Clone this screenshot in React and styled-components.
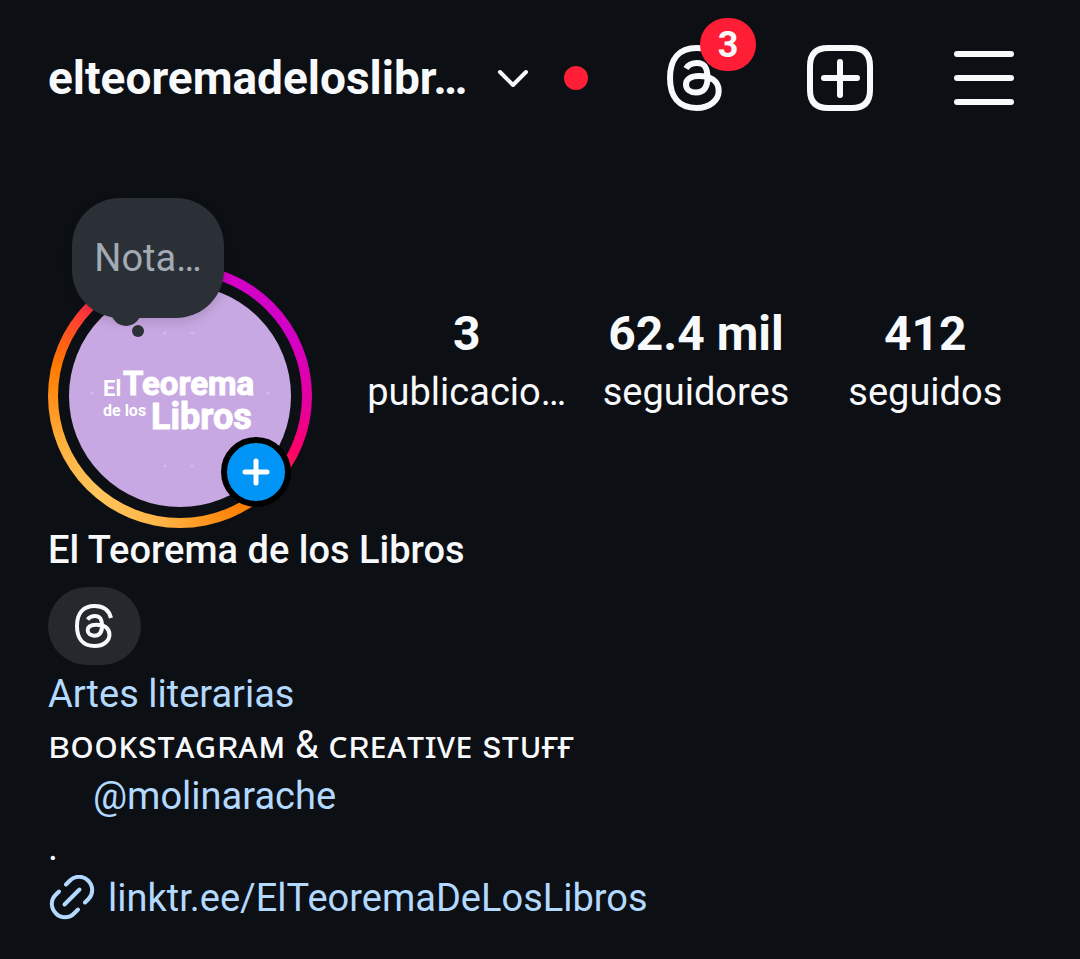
import styled, { createGlobalStyle } from "styled-components";

const background = "#0c0f14";
const primary_white = "#f8f9fb";
const link_blue = "#b3d9ff";
const red = "#ff1e36";
const primary_font = `Roboto, "Noto Sans", sans-serif`;

const GlobalStyle = createGlobalStyle`
	* {
		box-sizing: border-box;
	}
	body {
		margin: 0;
		background-color: ${background};
		color: ${primary_white};
		font-family: ${primary_font};
	}
	h1, h2, p, dl, dd {
		margin: 0;
	}
	button {
		border: 0;
		padding: 0;
		background: none;
		color: inherit;
		font-family: inherit;
		cursor: pointer;
	}
	a {
		color: ${link_blue};
		text-decoration: none;
	}
	svg {
		display: block;
	}
`;

// Top Bar
const TopBar = styled.header`
	display: flex;
	align-items: center;
	justify-content: space-between;
	height: 156px;
	padding: 0 65px 0 48px;
`;
const AccountButton = styled.button`
	display: flex;
	align-items: center;
`;
const Username = styled.h1`
	font-size: 46px;
	line-height: 56px;
	font-weight: 700;
	margin-right: 29px;
`;
const UnreadDot = styled.span`
	width: 24px;
	height: 24px;
	margin-left: 34px;
	border-radius: 50%;
	background-color: ${red};
`;
const BarRight = styled.nav`
	display: flex;
	align-items: center;
	gap: 80px;
`;
const IconButton = styled.button`
	position: relative;
`;
const Badge = styled.span`
	position: absolute;
	top: -27px;
	left: 33px;
	width: 56px;
	height: 53px;
	border-radius: 27px;
	background-color: ${red};
	font-size: 36px;
	line-height: 54px;
	font-weight: 700;
	text-align: center;
`;

// Avatar and stats
const ProfileRow = styled.section`
	display: flex;
	align-items: flex-start;
	gap: 40px;
	padding: 42px 40px 0 48px;
`;
const AvatarColumn = styled.div`
	position: relative;
	flex: none;
	padding-top: 66px;
`;
const StoryRing = styled.div`
	width: 264px;
	height: 264px;
	padding: 10px;
	border-radius: 50%;
	background: conic-gradient(
		#d300c5 0deg,
		#d300c5 62deg,
		#e6009c 95deg,
		#ff0069 116deg,
		#ff7a00 146deg,
		#ff8c14 162deg,
		#ffb648 190deg,
		#ffc55c 220deg,
		#ffb340 246deg,
		#ff7a00 284deg,
		#ff3040 314deg,
		#d300c5 350deg
	);
`;
const Photo = styled.div`
	border: 11px solid ${background};
	border-radius: 50%;
	background-color: #c8a8e2;
	overflow: hidden;
`;
const NoteBubble = styled.button`
	position: absolute;
	top: 0;
	left: 24px;
	width: 152px;
	height: 120px;
	border-radius: 48px;
	background-color: #2b3036;
	box-shadow: 0 4px 12px rgba(12, 15, 20, 0.15);
	color: #a2aab4;
	font-size: 38px;
	line-height: 44px;

	&::before,
	&::after {
		content: "";
		position: absolute;
		border-radius: 50%;
		background-color: #2b3036;
	}
	&::before {
		left: 39px;
		bottom: -8px;
		width: 30px;
		height: 30px;
	}
	&::after {
		left: 60px;
		bottom: -19px;
		width: 12px;
		height: 12px;
	}
`;
const AddStoryButton = styled.button`
	position: absolute;
	right: 21px;
	bottom: 21px;
	width: 70px;
	height: 70px;
	display: grid;
	place-items: center;
	border: 6px solid #000;
	border-radius: 50%;
	background-color: #0095f6;
`;
const Stats = styled.dl`
	flex: 1;
	display: grid;
	grid-template-columns: repeat(3, 1fr);
	padding-top: 108px;
`;
const Stat = styled.div`
	display: flex;
	flex-direction: column-reverse;
	gap: 8px;
	text-align: center;

	dt {
		font-size: 38px;
		line-height: 44px;
	}
	dd {
		font-size: 48px;
		line-height: 56px;
		font-weight: 700;
	}
`;

// Bio
const Bio = styled.section`
	padding: 0 48px 34px;
	font-size: 38px;
	line-height: 51px;
`;
const DisplayName = styled.h2`
	font-size: 38px;
	line-height: 44px;
	font-weight: 500;
`;
const ThreadsPill = styled.button`
	display: grid;
	place-items: center;
	width: 93px;
	height: 78px;
	margin: 15px 0 4px;
	border-radius: 39px;
	background-color: #25282d;
`;
const Mention = styled.p`
	padding-left: 45px;
`;
const SiteLink = styled.a`
	display: flex;
	align-items: center;
	gap: 12px;
`;

const stats = [
	{ label: "publicacio…", value: "3" },
	{ label: "seguidores", value: "62.4 mil" },
	{ label: "seguidos", value: "412" },
];

const ThreadsIcon = ({ width, height }) => (
	<svg
		width={width}
		height={height}
		viewBox="0 0 60 66"
		fill="none"
		stroke={primary_white}
		strokeWidth="6"
	>
		<path d="M54 21C51 9 42.500 3 29.500 3C12 3 3 14 3 33C3 52 12 63 29.500 63C43 63 51.700 55 51.700 46C51.700 36 43.500 31 32 31C24 31 19 34 19 39.500C19 44.500 23.500 47.500 29 47.500C36.500 47.500 40.500 42.500 40.500 33C40.500 23 38 18 30 18C24.500 18 21.500 19.500 19 23.500" />
	</svg>
);

const LogoText = () => (
	<svg
		width="222"
		height="222"
		viewBox="0 0 222 222"
		fill="#fff"
		stroke="#fff"
		strokeLinejoin="round"
		fontFamily={primary_font}
		fontWeight="700"
	>
		<g fill="#d8b9ec" stroke="none">
			<circle cx="96" cy="48" r="1.5" />
			<circle cx="123" cy="48" r="1.5" />
			<circle cx="96" cy="181" r="1.5" />
			<circle cx="123" cy="181" r="1.5" />
			<circle cx="23" cy="108" r="1.5" />
			<circle cx="199" cy="108" r="1.5" />
		</g>
		<text x="34" y="111" fontSize="22" strokeWidth="0">El</text>
		<text x="54" y="110" fontSize="33" strokeWidth="1">Teorema</text>
		<text x="34" y="131" fontSize="16" strokeWidth="0">de los</text>
		<text x="82" y="144" fontSize="36" strokeWidth="1">Libros</text>
	</svg>
);

const App = () => {
	return (
		<>
			<GlobalStyle />
			<TopBar>
				<AccountButton>
					<Username>elteoremadeloslibr…</Username>
					<svg width="34" height="24" viewBox="0 0 34 24" fill="none" stroke={primary_white} strokeWidth="4" strokeLinecap="round" strokeLinejoin="round">
						<path d="M4 6L17 19L30 6" />
					</svg>
					<UnreadDot />
				</AccountButton>
				<BarRight>
					<IconButton aria-label="Threads">
						<ThreadsIcon width={60} height={66} />
						<Badge>3</Badge>
					</IconButton>
					<IconButton aria-label="Crear">
						<svg width="66" height="66" viewBox="0 0 66 66" fill="none" stroke={primary_white} strokeWidth="6" strokeLinecap="round">
							<path d="M21 3H45C57 3 63 9 63 21V45C63 57 57 63 45 63H21C9 63 3 57 3 45V21C3 9 9 3 21 3Z" />
							<path d="M33 17V50M17 33H50" />
						</svg>
					</IconButton>
					<IconButton aria-label="Menú">
						<svg width="62" height="66" viewBox="0 0 62 66" fill="none" stroke={primary_white} strokeWidth="6" strokeLinecap="round">
							<path d="M4 9H58M4 33H58M4 57H58" />
						</svg>
					</IconButton>
				</BarRight>
			</TopBar>

			<ProfileRow>
				<AvatarColumn>
					<StoryRing>
						<Photo>
							<LogoText />
						</Photo>
					</StoryRing>
					<NoteBubble>Nota…</NoteBubble>
					<AddStoryButton aria-label="Agregar historia">
						<svg width="28" height="28" viewBox="0 0 28 28" fill="none" stroke="#fff" strokeWidth="5" strokeLinecap="round">
							<path d="M14 3V25M3 14H25" />
						</svg>
					</AddStoryButton>
				</AvatarColumn>
				<Stats>
					{stats.map(({ label, value }) => (
						<Stat key={label}>
							<dt>{label}</dt>
							<dd>{value}</dd>
						</Stat>
					))}
				</Stats>
			</ProfileRow>

			<Bio>
				<DisplayName>El Teorema de los Libros</DisplayName>
				<ThreadsPill aria-label="Perfil de Threads">
					<ThreadsIcon width={40} height={44} />
				</ThreadsPill>
				<p>
					<a href="#categoria">Artes literarias</a>
				</p>
				<p>ʙᴏᴏᴋsᴛᴀɢʀᴀᴍ & ᴄʀᴇᴀᴛɪᴠᴇ sᴛᴜғғ</p>
				<Mention>
					<a href="#molinarache">@molinarache</a>
				</Mention>
				<p>.</p>
				<SiteLink href="#linktree">
					<svg width="48" height="48" viewBox="-2 0 48 48" fill="none" stroke={link_blue} strokeWidth="4" strokeLinecap="round">
						<path d="M16 9.500L20 5.500C25 0.500 33 0.500 38 5.500C43.500 11 43.500 19 38.500 24L35 27.500" />
						<path d="M28 34.500L24 38.500C19 43.500 11 43.500 6 38.500C0.500 33 0.500 25 5.500 20L9 16.500" />
						<path d="M14.500 29.500L29.500 14.500" />
					</svg>
					linktr.ee/ElTeoremaDeLosLibros
				</SiteLink>
			</Bio>
		</>
	);
};

export default App;
